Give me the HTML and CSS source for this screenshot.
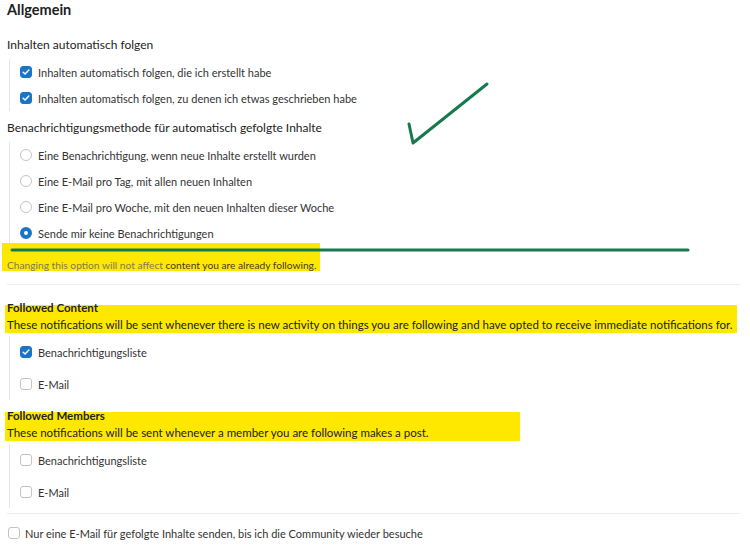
FILE: index.html
```html
<!DOCTYPE html>
<html lang="de">
<head>
    <meta charset="UTF-8">
    <title>Benachrichtigungen</title>
    <link rel="stylesheet" href="styles.css">
</head>
<body>
    <div class="page">
        <h2 class="title">Allgemein</h2>

        <h3 class="group-title">Inhalten automatisch folgen</h3>
        <div class="option-list">
            <label class="option"><span class="box checked"></span>Inhalten automatisch folgen, die ich erstellt habe</label>
            <label class="option"><span class="box checked"></span>Inhalten automatisch folgen, zu denen ich etwas geschrieben habe</label>
        </div>

        <h3 class="group-title">Benachrichtigungsmethode für automatisch gefolgte Inhalte</h3>
        <div class="option-list">
            <label class="option"><span class="radio"></span>Eine Benachrichtigung, wenn neue Inhalte erstellt wurden</label>
            <label class="option"><span class="radio"></span>Eine E-Mail pro Tag, mit allen neuen Inhalten</label>
            <label class="option"><span class="radio"></span>Eine E-Mail pro Woche, mit den neuen Inhalten dieser Woche</label>
            <label class="option"><span class="radio checked"></span>Sende mir keine Benachrichtigungen</label>
        </div>

        <p class="note marked">Changing this option will not affect <span class="note-dark">content you are already following.</span></p>

        <hr class="divider">

        <div class="block-head wide">
            <div class="block-name">Followed Content</div>
            <div class="block-desc">These notifications will be sent whenever there is new activity on things you are following and have opted to receive immediate notifications for.</div>
        </div>
        <div class="option-list tall">
            <label class="option"><span class="box checked"></span>Benachrichtigungsliste</label>
            <label class="option"><span class="box"></span>E-Mail</label>
        </div>

        <div class="block-head short">
            <div class="block-name">Followed Members</div>
            <div class="block-desc">These notifications will be sent whenever a member you are following makes a post.</div>
        </div>
        <div class="option-list tall">
            <label class="option"><span class="box"></span>Benachrichtigungsliste</label>
            <label class="option"><span class="box"></span>E-Mail</label>
        </div>

        <hr class="divider last">

        <label class="option single"><span class="box"></span>Nur eine E-Mail für gefolgte Inhalte senden, bis ich die Community wieder besuche</label>

        <!-- handschriftliche Markierung -->
        <svg class="scribble" width="750" height="551" viewBox="0 0 750 551">
            <polyline points="409,124 413,143 487,84" fill="none" stroke="#17794d" stroke-width="3" stroke-linecap="round" stroke-linejoin="round"/>
            <line x1="12" y1="250" x2="688" y2="250" stroke="#17794d" stroke-width="3" stroke-linecap="round"/>
        </svg>
    </div>
</body>
</html>
```

FILE: styles.css
```css
* {
    margin: 0;
    padding: 0;
    box-sizing: border-box;
}

body {
    background-color: #fff;
    font-family: 'Lato', 'Noto Sans', sans-serif;
    color: #222;
}

.page {
    position: relative;
    width: 750px;
    height: 551px;
    padding: 0 10px 0 7px;
    overflow: hidden;
}

.title {
    font-size: 14.5px;
    font-weight: 700;
    line-height: 20px;
    margin-bottom: 16px;
}

.group-title {
    font-size: 12px;
    font-weight: 400;
    line-height: 18px;
    margin-bottom: 5px;
}

.option-list {
    margin-left: 2px;
    border-left: 1px solid #e6e6e6;
    padding-left: 10px;
    margin-bottom: 8px;
}

.option {
    display: flex;
    align-items: center;
    gap: 6px;
    height: 26px;
    font-size: 11px;
    color: #333;
}

.box {
    width: 12px;
    height: 12px;
    border: 1px solid #c4c4c4;
    border-radius: 3px;
    background: #fff;
    flex-shrink: 0;
}

.box.checked {
    border-color: #1a75c6;
    background: #1a75c6 url("data:image/svg+xml,%3Csvg xmlns='http://www.w3.org/2000/svg' viewBox='0 0 12 12'%3E%3Cpath d='M3.2 6.2 5.1 8 8.8 4.1' fill='none' stroke='white' stroke-width='1.5' stroke-linecap='round' stroke-linejoin='round'/%3E%3C/svg%3E") center / 12px 12px no-repeat;
}

.radio {
    width: 12px;
    height: 12px;
    border: 1px solid #c4c4c4;
    border-radius: 50%;
    background: #fff;
    flex-shrink: 0;
}

.radio.checked {
    border: 4px solid #1a75c6;
}

.marked {
    background-color: #ffe800;
}

.note {
    width: fit-content;
    margin: -11px 0 0 -5px;
    padding: 16px 4px 0 5px;
    font-size: 10.2px;
    line-height: 12px;
    color: #7c7a55;
}

.note-dark {
    color: #3d3b22;
}

.divider {
    border: none;
    border-top: 1px solid #ececec;
    margin: 13px 0 14px;
}

.block-head {
    font-size: 11.5px;
    line-height: 17px;
    color: #222;
    margin-left: -2px;
    padding: 0 2px;
    background: linear-gradient(transparent 6px, #ffe800 6px);
}

.block-head.wide {
    width: 732px;
}

.block-head.short {
    width: 515px;
    margin-top: 7px;
    background: linear-gradient(transparent 5px, #ffe800 5px);
}

.block-name {
    font-weight: 700;
}

.option-list.tall {
    margin-top: 3px;
    margin-bottom: 0;
}

.option-list.tall .option {
    height: 32px;
}

.divider.last {
    margin: 5px 0 6px;
}

.single {
    gap: 5px;
    margin-left: 1px;
}

.scribble {
    position: absolute;
    left: 0;
    top: 0;
    pointer-events: none;
}
```
